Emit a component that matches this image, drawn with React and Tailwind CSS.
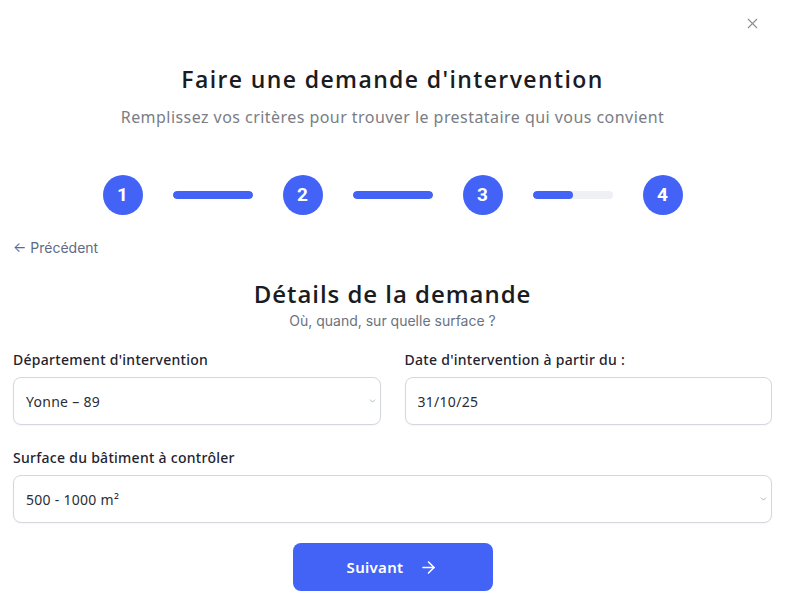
import { useState } from "react"
import { X, ArrowRight, ChevronDown } from "lucide-react"

const heading = { fontFamily: '"Open Sans", "Noto Sans", sans-serif' }

function Step({ n }) {
  return (
    <div className="w-10 h-10 rounded-full bg-[#4263f6] text-white flex items-center justify-center text-[19px] font-bold" style={{ fontFamily: "Roboto, sans-serif" }}>
      {n}
    </div>
  )
}

function Bar({ fill = 100 }) {
  return (
    <div className="w-20 h-2 rounded-full bg-[#eef0f4] overflow-hidden mx-[30px]">
      <div className="h-full rounded-full bg-[#4263f6]" style={{ width: `${fill}%` }}></div>
    </div>
  )
}

function SelectField({ label, value, options, onChange }) {
  return (
    <div className="flex flex-col">
      <label className="text-[14px] font-medium tracking-[0.02em] text-[#1f2330] mb-[7px] leading-5">{label}</label>
      <div className="relative">
        <select
          value={value}
          onChange={(e) => onChange(e.target.value)}
          className="w-full h-12 appearance-none rounded-lg border border-[#d4d7de] bg-white pl-[12px] pr-8 text-[14px] tracking-[0.02em] text-[#2a2d36] outline-none shadow-[0_1px_2px_rgba(0,0,0,0.04)]"
        >
          {options.map((o) => (
            <option key={o}>{o}</option>
          ))}
        </select>
        <ChevronDown size={9} strokeWidth={2} className="absolute right-[4px] top-1/2 -translate-y-1/2 text-gray-400 pointer-events-none" />
      </div>
    </div>
  )
}

export default function App() {
  const [dep, setDep] = useState("Yonne – 89")
  const [date, setDate] = useState("31/10/25")
  const [surface, setSurface] = useState("500 - 1000 m²")

  return (
    <div className="relative w-full min-h-[615px] bg-white px-[13px]" style={{ fontFamily: '"Noto Sans", sans-serif' }}>
      {/* Close */}
      <button className="absolute right-[24px] top-[15px] text-[#8a8d94]">
        <X size={17} strokeWidth={1.6} />
      </button>

      {/* Header */}
      <div className="pt-[63px] text-center">
        <h1 className="text-[23px] font-semibold tracking-[0.06em] text-[#1a1c22] leading-8" style={heading}>
          Faire une demande d'intervention
        </h1>
        <p className="mt-[10px] text-[16px] tracking-[0.028em] text-[#7a7d85] leading-6">
          Remplissez vos critères pour trouver le prestataire qui vous convient
        </p>
      </div>

      {/* Stepper */}
      <div className="mt-[46px] flex items-center justify-center">
        <Step n={1} />
        <Bar />
        <Step n={2} />
        <Bar />
        <Step n={3} />
        <Bar fill={50} />
        <Step n={4} />
      </div>

      {/* Back */}
      <button className="mt-[23px] text-[14px] text-[#5f6b85] leading-5" style={{ fontFamily: "Inter, sans-serif" }}>
        ← Précédent
      </button>

      {/* Section title */}
      <div className="mt-[19px] text-center">
        <h2 className="text-[24px] font-semibold tracking-[0.04em] text-[#1a1c22] leading-8" style={heading}>
          Détails de la demande
        </h2>
        <p className="mt-[1px] text-[14px] text-[#6b7280] leading-5" style={{ fontFamily: "Inter, sans-serif" }}>
          Où, quand, sur quelle surface ?
        </p>
      </div>

      {/* Form */}
      <div className="mt-[19px] grid grid-cols-2 gap-x-[24px]">
        <SelectField
          label="Département d'intervention"
          value={dep}
          onChange={setDep}
          options={["Yonne – 89", "Yvelines – 78", "Paris – 75"]}
        />
        <div className="flex flex-col">
          <label className="text-[14px] font-medium tracking-[0.02em] text-[#1f2330] mb-[7px] leading-5">Date d'intervention à partir du :</label>
          <input
            type="text"
            value={date}
            onChange={(e) => setDate(e.target.value)}
            className="w-full h-12 rounded-lg border border-[#d4d7de] bg-white px-[12px] text-[14px] tracking-[0.02em] text-[#2a2d36] outline-none shadow-[0_1px_2px_rgba(0,0,0,0.04)]"
          />
        </div>
      </div>

      <div className="mt-[23px]">
        <SelectField
          label="Surface du bâtiment à contrôler"
          value={surface}
          onChange={setSurface}
          options={["0 - 500 m²", "500 - 1000 m²", "1000 - 2000 m²"]}
        />
      </div>

      <div className="mt-[20px] flex justify-center">
        <button className="w-[200px] h-12 rounded-lg bg-[#4263f6] text-white text-[15px] font-semibold tracking-[0.02em] flex items-center justify-center gap-[16px]">
          Suivant
          <ArrowRight size={19} strokeWidth={2} />
        </button>
      </div>
    </div>
  )
}
